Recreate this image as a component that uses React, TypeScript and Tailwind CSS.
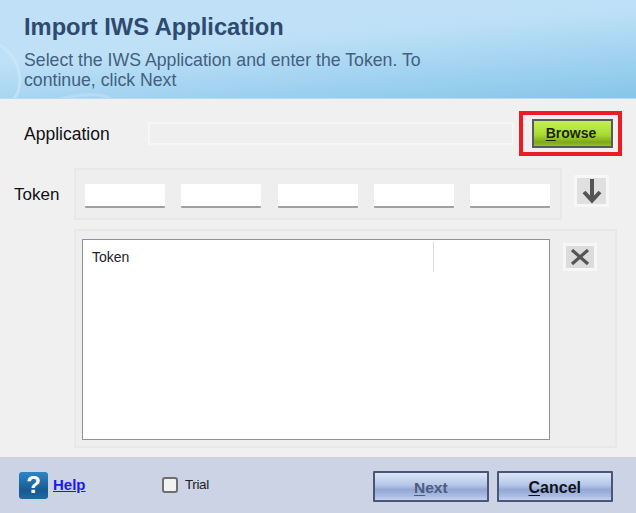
const sans = "font-['Liberation_Sans',Arial,sans-serif]";

function Underlined({ first, rest }: { first: string; rest: string }) {
  return (
    <span>
      <span className="underline underline-offset-2">{first}</span>
      {rest}
    </span>
  );
}

function FooterButton({ first, rest, muted }: { first: string; rest: string; muted?: boolean }) {
  return (
    <button
      className={`h-[31px] w-[116px] rounded-[1px] border-2 border-[#4a5678] bg-[linear-gradient(#dbe6f7,#b4c6e8_45%,#93a7d4_62%,#a9bbe2_85%,#c4d2ee)] pt-[2px] font-bold ${
        muted ? "text-[15.5px] text-[#4e5c82]" : "text-[16px] text-[#10131c]"
      }`}
    >
      <Underlined first={first} rest={rest} />
    </button>
  );
}

export default function App() {
  return (
    <div className={`flex h-[513px] w-[636px] flex-col overflow-hidden bg-[#f0f0f0] ${sans}`}>
      {/* banner */}
      <header className="relative h-[99px] shrink-0 overflow-hidden border-b border-[#b9dcf2] bg-[linear-gradient(175deg,#bfe0f6_0%,#bfe1f7_40%,#86c5ea_100%)] pl-[24px] pt-[13px]">
        <svg className="absolute left-0 top-0" width="636" height="99" fill="none">
          <path d="M0 45C22 60 24 85 14 99" stroke="#d3ebf9" strokeOpacity="0.5" strokeWidth="3" />
          <path d="M60 99C90 92 104 95 112 99" stroke="#d3ebf9" strokeOpacity="0.35" strokeWidth="3" />
        </svg>
        <h1 className="relative text-[23.7px] font-bold leading-[28px] text-[#2f4a70]">Import IWS Application</h1>
        <p className="relative mt-[9px] w-[410px] text-[17.7px] leading-[20px] text-[#44607f]">
          Select the IWS Application and enter the Token. To continue, click Next
        </p>
      </header>

      <main className="flex-1">
        {/* application row */}
        <div className="mt-[12px] flex h-[45px] items-center pl-[24px]">
          <span className="mt-[1px] w-[124px] text-[17.5px] text-[#111]">Application</span>
          <div className="h-[23px] w-[366px] border-2 border-[#f6f6f6] bg-[#efefef]" />
          <div className="ml-[5px] flex h-[45px] w-[103px] items-center justify-center border-4 border-[#ed1c24] pl-[3px]">
            <button className="h-[29px] w-[81px] border-2 border-[#5a5a5a] bg-[linear-gradient(#c4f054,#a8dc30_55%,#7ea81a_85%,#94c424)] pr-[2px] text-[14px] font-bold text-[#1c2408]">
              <Underlined first="B" rest="rowse" />
            </button>
          </div>
        </div>

        {/* token row */}
        <div className="mt-[12px] flex h-[52px] items-center pl-[14px]">
          <span className="mt-[1px] w-[60px] text-[17px] text-[#111]">Token</span>
          <div className="flex h-[52px] w-[488px] items-center gap-[16.25px] border-2 border-[#e8e8e8] bg-[#eeeeee] pl-[9px] pt-[4px]">
            {[0, 1, 2, 3, 4].map((i) => (
              <div key={i} className="h-[24px] w-[80px] rounded-[1px] border-b-2 border-[#a0a0a0] bg-white" />
            ))}
          </div>
          <button className="-mt-[6px] ml-[12px] flex h-[32px] w-[35px] items-center justify-center border-[3px] border-[#f7f7f7] bg-[#e0e0e0]">
            <svg width="24" height="26" viewBox="0 0 24 26" fill="none" stroke="#555555" strokeWidth="4">
              <path d="M12 1V22" />
              <path d="M4 14L12 22.5L20 14" />
            </svg>
          </button>
        </div>

        {/* token list */}
        <div className="mt-[9px] flex pl-[74px]">
          <div className="h-[219px] w-[543px] border-2 border-[#e8e8e8] bg-[#eeeeee] pl-[6px] pt-[8px]">
            <div className="flex h-[201px] w-[468px] border-[1.5px] border-[#8f9399] bg-white">
              <div className="mt-[2px] flex h-[30px] w-[351px] items-center border-r border-[#dcdcdc] pl-[9px] text-[14px] text-[#222]">
                Token
              </div>
            </div>
          </div>
          <button className="-ml-[54px] mt-[14px] flex h-[28px] w-[34px] items-center justify-center self-start border-[3px] border-[#f7f7f7] bg-[#dcdcdc]">
            <svg width="20" height="16" viewBox="0 0 20 16" fill="none" stroke="#555555" strokeWidth="3.2">
              <path d="M2 1L18 15M18 1L2 15" />
            </svg>
          </button>
        </div>
      </main>

      {/* footer */}
      <footer className="flex h-[56px] shrink-0 items-center bg-[#cbd3e5] pl-[19px]">
        <div className="flex h-[27px] w-[29px] items-center justify-center rounded-[3px] bg-[linear-gradient(#2c85c6,#17598f_70%,#1f6ba6)] text-[24px] font-bold leading-none text-white">
          ?
        </div>
        <a href="#" className="ml-[5px] w-[33px] text-[15px] font-bold text-[#1a1aee] underline">
          Help
        </a>
        <label className="ml-[76px] flex items-center">
          <span className="h-[16px] w-[16px] rounded-[3px] border-2 border-[#6e6e6e] bg-[#f2f2f2]" />
          <span className="ml-[7px] text-[13.5px] tracking-[-0.4px] text-[#222]">Trial</span>
        </label>
        <div className="ml-[164px] mt-[3px] flex gap-[8px]">
          <FooterButton first="N" rest="ext" muted />
          <FooterButton first="C" rest="ancel" />
        </div>
      </footer>
    </div>
  );
}
